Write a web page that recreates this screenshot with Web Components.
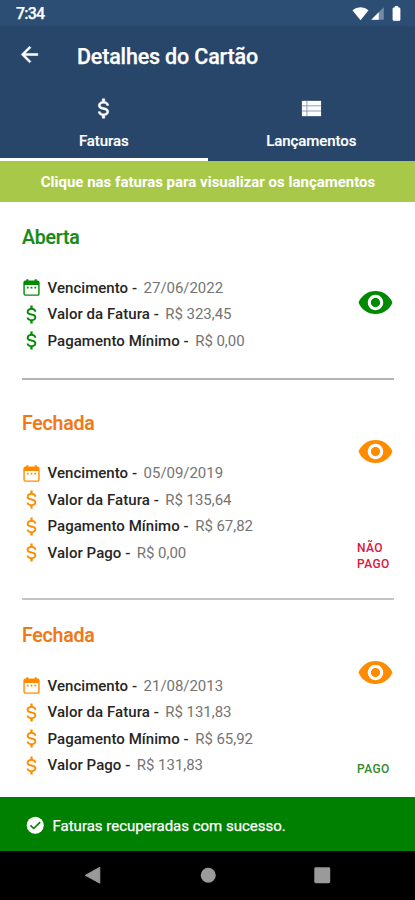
<!DOCTYPE html>
<html lang="pt-BR">
<head>
<meta charset="utf-8">
<title>Detalhes do Cartão</title>
<style>
html,body{margin:0;padding:0;height:100%}
body{font-family:Roboto,"Liberation Sans",sans-serif;background:#fff;overflow:hidden}
</style>
</head>
<body>
<card-details-screen></card-details-screen>
<script>
const define = (name, html, setup) => customElements.define(name, class extends HTMLElement {
  connectedCallback() {
    if (this.shadowRoot) return;
    const t = document.createElement('template');
    t.innerHTML = html;
    this.attachShadow({mode: 'open'}).append(t.content.cloneNode(true));
    if (setup) setup(this, this.shadowRoot);
  }
});

const ICONS = {
  back: '<path d="M20 11H7.8l5.6-5.6L12 4l-8 8 8 8 1.4-1.4L7.8 13H20z" stroke="currentColor" stroke-width=".5"/>',
  dollar: '<path d="M7 15h2c0 1.08 1.37 2 3 2s3-.92 3-2c0-1.1-1.04-1.5-3.24-2.03C9.64 12.44 7 11.78 7 9c0-1.79 1.47-3.31 3.8-3.82V2.700h2.400v2.480C15.53 5.69 17 7.21 17 9h-2c0-1.08-1.37-2-3-2s-3 .92-3 2c0 1.1 1.04 1.5 3.24 2.03C14.36 11.56 17 12.22 17 15c0 1.79-1.47 3.31-3.8 3.82v2.480h-2.400v-2.480C8.47 18.31 7 16.79 7 15z"/>',
  list: '<path d="M2 4h20v16H2z"/><path d="M2 9.2h20M2 14.6h20M7.2 4v16" stroke="#8e98ad" stroke-width="1" fill="none"/>',
  calendar: '<path fill-rule="evenodd" d="M6 2.5h2.4V4h7.2V2.5H18V4h1a2.3 2.3 0 0 1 2.3 2.3v13A2.3 2.3 0 0 1 19 21.5H5a2.3 2.3 0 0 1-2.3-2.3v-13A2.3 2.3 0 0 1 5 4h1zM4.3 9v10c0 .6.4 1 1 1h13.4c.6 0 1-.4 1-1V9z"/><path d="M6.7 11.2h2v2h-2zm4.3 0h2v2h-2zm4.3 0h2v2h-2z"/>',
  eye: '<path d="M12 4.5C7 4.5 2.73 7.61 1 12c1.73 4.39 6 7.5 11 7.5s9.27-3.11 11-7.5c-1.73-4.39-6-7.5-11-7.5zM12 17c-2.76 0-5-2.24-5-5s2.24-5 5-5 5 2.24 5 5-2.24 5-5 5zm0-8c-1.66 0-3 1.34-3 3s1.34 3 3 3 3-1.34 3-3-1.34-3-3-3z"/>',
  check: '<circle cx="12" cy="12" r="10"/><path d="M6.4 12.2l3.8 3.6 7.6-7.4" fill="none" stroke="#008000" stroke-width="1.9"/>',
  wifi: '<path d="M12 21.5L.6 7.4Q5.6 3 12 3t11.4 4.4z"/>',
  signal: '<path d="M22 2v20H2z" fill-opacity=".35"/><path d="M14 10v12H2z"/>',
  battery: '<path d="M15.7 4H14V2h-4v2H8.3C7.6 4 7 4.600 7 5.300v15.400C7 21.400 7.600 22 8.300 22h7.400c.7 0 1.300-.6 1.300-1.300V5.300C17 4.600 16.400 4 15.700 4z" stroke="currentColor" stroke-width="1"/>',
  navback: '<path d="M19 3.500v17L3.500 12z" stroke-width="1" stroke="currentColor" stroke-linejoin="round"/>',
  navhome: '<circle cx="12" cy="12" r="8"/>',
  navrecent: '<rect x="3.500" y="3.500" width="17" height="17" rx="1.500"/>'
};
define('ui-icon', `<style>:host{display:block;flex:none;width:var(--s,24px);height:var(--s,24px)}svg{display:block;width:100%;height:100%;fill:currentColor}</style><svg viewBox="0 0 24 24"></svg>`,
  (h, r) => { r.querySelector('svg').innerHTML = ICONS[h.getAttribute('name')]; });

define('status-bar', `<style>
:host{display:flex;align-items:center;justify-content:space-between;height:26px;box-sizing:border-box;padding:1px 10px 0 16px;background:#2c4e74;color:#fff;font-size:16px;font-weight:500}
.i{display:flex;align-items:center}
.t{letter-spacing:-.8px;-webkit-text-stroke:.25px #fff}
</style><span class="t">7:34</span><div class="i"><ui-icon name="wifi" style="--s:17px"></ui-icon><ui-icon name="signal" style="--s:15px;margin-left:1px"></ui-icon><ui-icon name="battery" style="--s:17px;margin-left:3px"></ui-icon></div>`);

define('app-toolbar', `<style>
:host{display:flex;align-items:center;height:62px;box-sizing:border-box;padding:0 17px;background:#284669;color:#fff}
ui-icon{--s:25px;margin-top:-5px}
h1{margin:0 0 0 35px;font-size:21.500px;line-height:28px;font-weight:500;letter-spacing:-.17px;-webkit-text-stroke:.25px #fff}
</style><ui-icon name="back"></ui-icon><h1><slot></slot></h1>`);

define('tab-item', `<style>
:host{flex:1;display:flex;flex-direction:column;align-items:center;box-sizing:border-box;height:73px;padding-top:8px;border-bottom:3px solid transparent;color:#fff;font-size:15px;font-weight:500;line-height:20px}
:host([active]){border-bottom-color:#fff}
ui-icon{--s:25px;stroke:currentColor;stroke-width:.5px}
span{margin-top:10px;letter-spacing:-.08px;-webkit-text-stroke:.15px #fff}
</style><ui-icon></ui-icon><span><slot></slot></span>`,
  (h, r) => { const i = r.querySelector('ui-icon'), n = document.createElement('ui-icon'); n.setAttribute('name', h.getAttribute('icon')); if (h.getAttribute('icon') === 'list') n.style.cssText = '--s:23px;margin:1px 0 1px 1px;stroke-width:0'; i.replaceWith(n); });

define('info-banner', `<style>
:host{display:flex;align-items:center;justify-content:center;height:41px;background:#a8c84a;color:#fff;font-size:15px;font-weight:700;padding:1px 0 0 1px;box-sizing:border-box;white-space:nowrap}
</style><slot></slot>`);

define('invoice-row', `<style>
:host{display:flex;align-items:center;height:26.6px;font-size:15px;line-height:20px;white-space:nowrap}
.ic{width:25.500px;display:flex;color:var(--tone)}
b{font-weight:500;color:#262626;letter-spacing:.05px}
em{font-style:normal;color:#747474;margin-left:6.500px;letter-spacing:-.04px}
</style><span class="ic"></span><b></b><em><slot></slot></em>`,
  (h, r) => {
    const cal = h.hasAttribute('date');
    r.querySelector('.ic').innerHTML = cal ? '<ui-icon name="calendar" style="--s:21px;margin-left:-1px"></ui-icon>' : '<ui-icon name="dollar" style="--s:23px;margin-left:-2px"></ui-icon>';
    r.querySelector('b').textContent = h.getAttribute('label') + ' -';
  });

define('invoice-card', `<style>
:host{display:flex;justify-content:space-between;box-sizing:border-box;height:var(--h);margin:0 21px 0 22px;border-bottom:2px solid var(--rule,#c4c4c4)}
:host(:last-of-type){border-bottom:0}
.main{padding-top:var(--top)}
h2{margin:0 0 23.400px;font-size:19.500px;line-height:26px;font-weight:500;color:var(--title);letter-spacing:-.2px;-webkit-text-stroke:.2px var(--title)}
.side{display:flex;flex-direction:column;width:37px;padding-top:var(--eye);gap:71.500px;color:var(--tone)}
ui-icon{--s:37px}
.s{font-size:12px;font-weight:500;line-height:15.500px;letter-spacing:.4px;color:var(--state)}
</style><div class="main"><h2></h2><slot></slot></div><div class="side"><ui-icon name="eye"></ui-icon><div class="s"></div></div>`,
  (h, r) => { r.querySelector('h2').textContent = h.getAttribute('heading'); r.querySelector('.s').textContent = h.getAttribute('state') || ''; });

define('snack-bar', `<style>
:host{display:flex;align-items:center;height:53.500px;box-sizing:border-box;padding:4px 0 0 25px;background:#008000;color:#fff;font-size:15px;gap:7px;-webkit-text-stroke:.25px #fff}
ui-icon{--s:20.500px;margin-top:-1px}
</style><ui-icon name="check"></ui-icon><slot></slot>`);

define('nav-bar', `<style>
:host{display:flex;height:49.500px;background:#000;color:#9a9a9a;align-items:center;justify-content:space-between;padding:0 82px;box-sizing:border-box}
ui-icon{--s:22.500px}
[name=navhome]{margin-left:1px}
</style><ui-icon name="navback"></ui-icon><ui-icon name="navhome"></ui-icon><ui-icon name="navrecent"></ui-icon>`);

define('card-details-screen', `<style>
:host{display:flex;flex-direction:column;width:415px;height:900px;background:#fff;overflow:hidden}
.tabs{display:flex;background:#284669}
main{flex:1;min-height:0;overflow:hidden}
.open{--tone:#008a00;--title:#168a16;--rule:#b2b2b2}
.closed{--tone:#ff8c00;--title:#f07818}
</style>
<status-bar></status-bar>
<app-toolbar>Detalhes do Cartão</app-toolbar>
<div class="tabs"><tab-item icon="dollar" active>Faturas</tab-item><tab-item icon="list">Lançamentos</tab-item></div>
<info-banner>Clique nas faturas para visualizar os lançamentos</info-banner>
<main>
<invoice-card class="open" heading="Aberta" style="--h:178px;--top:23px;--eye:82px">
<invoice-row date label="Vencimento">27/06/2022</invoice-row>
<invoice-row label="Valor da Fatura">R$ 323,45</invoice-row>
<invoice-row label="Pagamento Mínimo">R$ 0,00</invoice-row>
</invoice-card>
<invoice-card class="closed" heading="Fechada" state="NÃO PAGO" style="--h:220px;--top:30.500px;--eye:52.500px;--state:#dc143c">
<invoice-row date label="Vencimento">05/09/2019</invoice-row>
<invoice-row label="Valor da Fatura">R$ 135,64</invoice-row>
<invoice-row label="Pagamento Mínimo">R$ 67,82</invoice-row>
<invoice-row label="Valor Pago">R$ 0,00</invoice-row>
</invoice-card>
<invoice-card class="closed" heading="Fechada" state="PAGO" style="--h:197px;--top:23px;--eye:53.500px;--state:#2e8b2e">
<invoice-row date label="Vencimento">21/08/2013</invoice-row>
<invoice-row label="Valor da Fatura">R$ 131,83</invoice-row>
<invoice-row label="Pagamento Mínimo">R$ 65,92</invoice-row>
<invoice-row label="Valor Pago">R$ 131,83</invoice-row>
</invoice-card>
</main>
<snack-bar>Faturas recuperadas com sucesso.</snack-bar>
<nav-bar></nav-bar>`);
</script>
</body>
</html>
